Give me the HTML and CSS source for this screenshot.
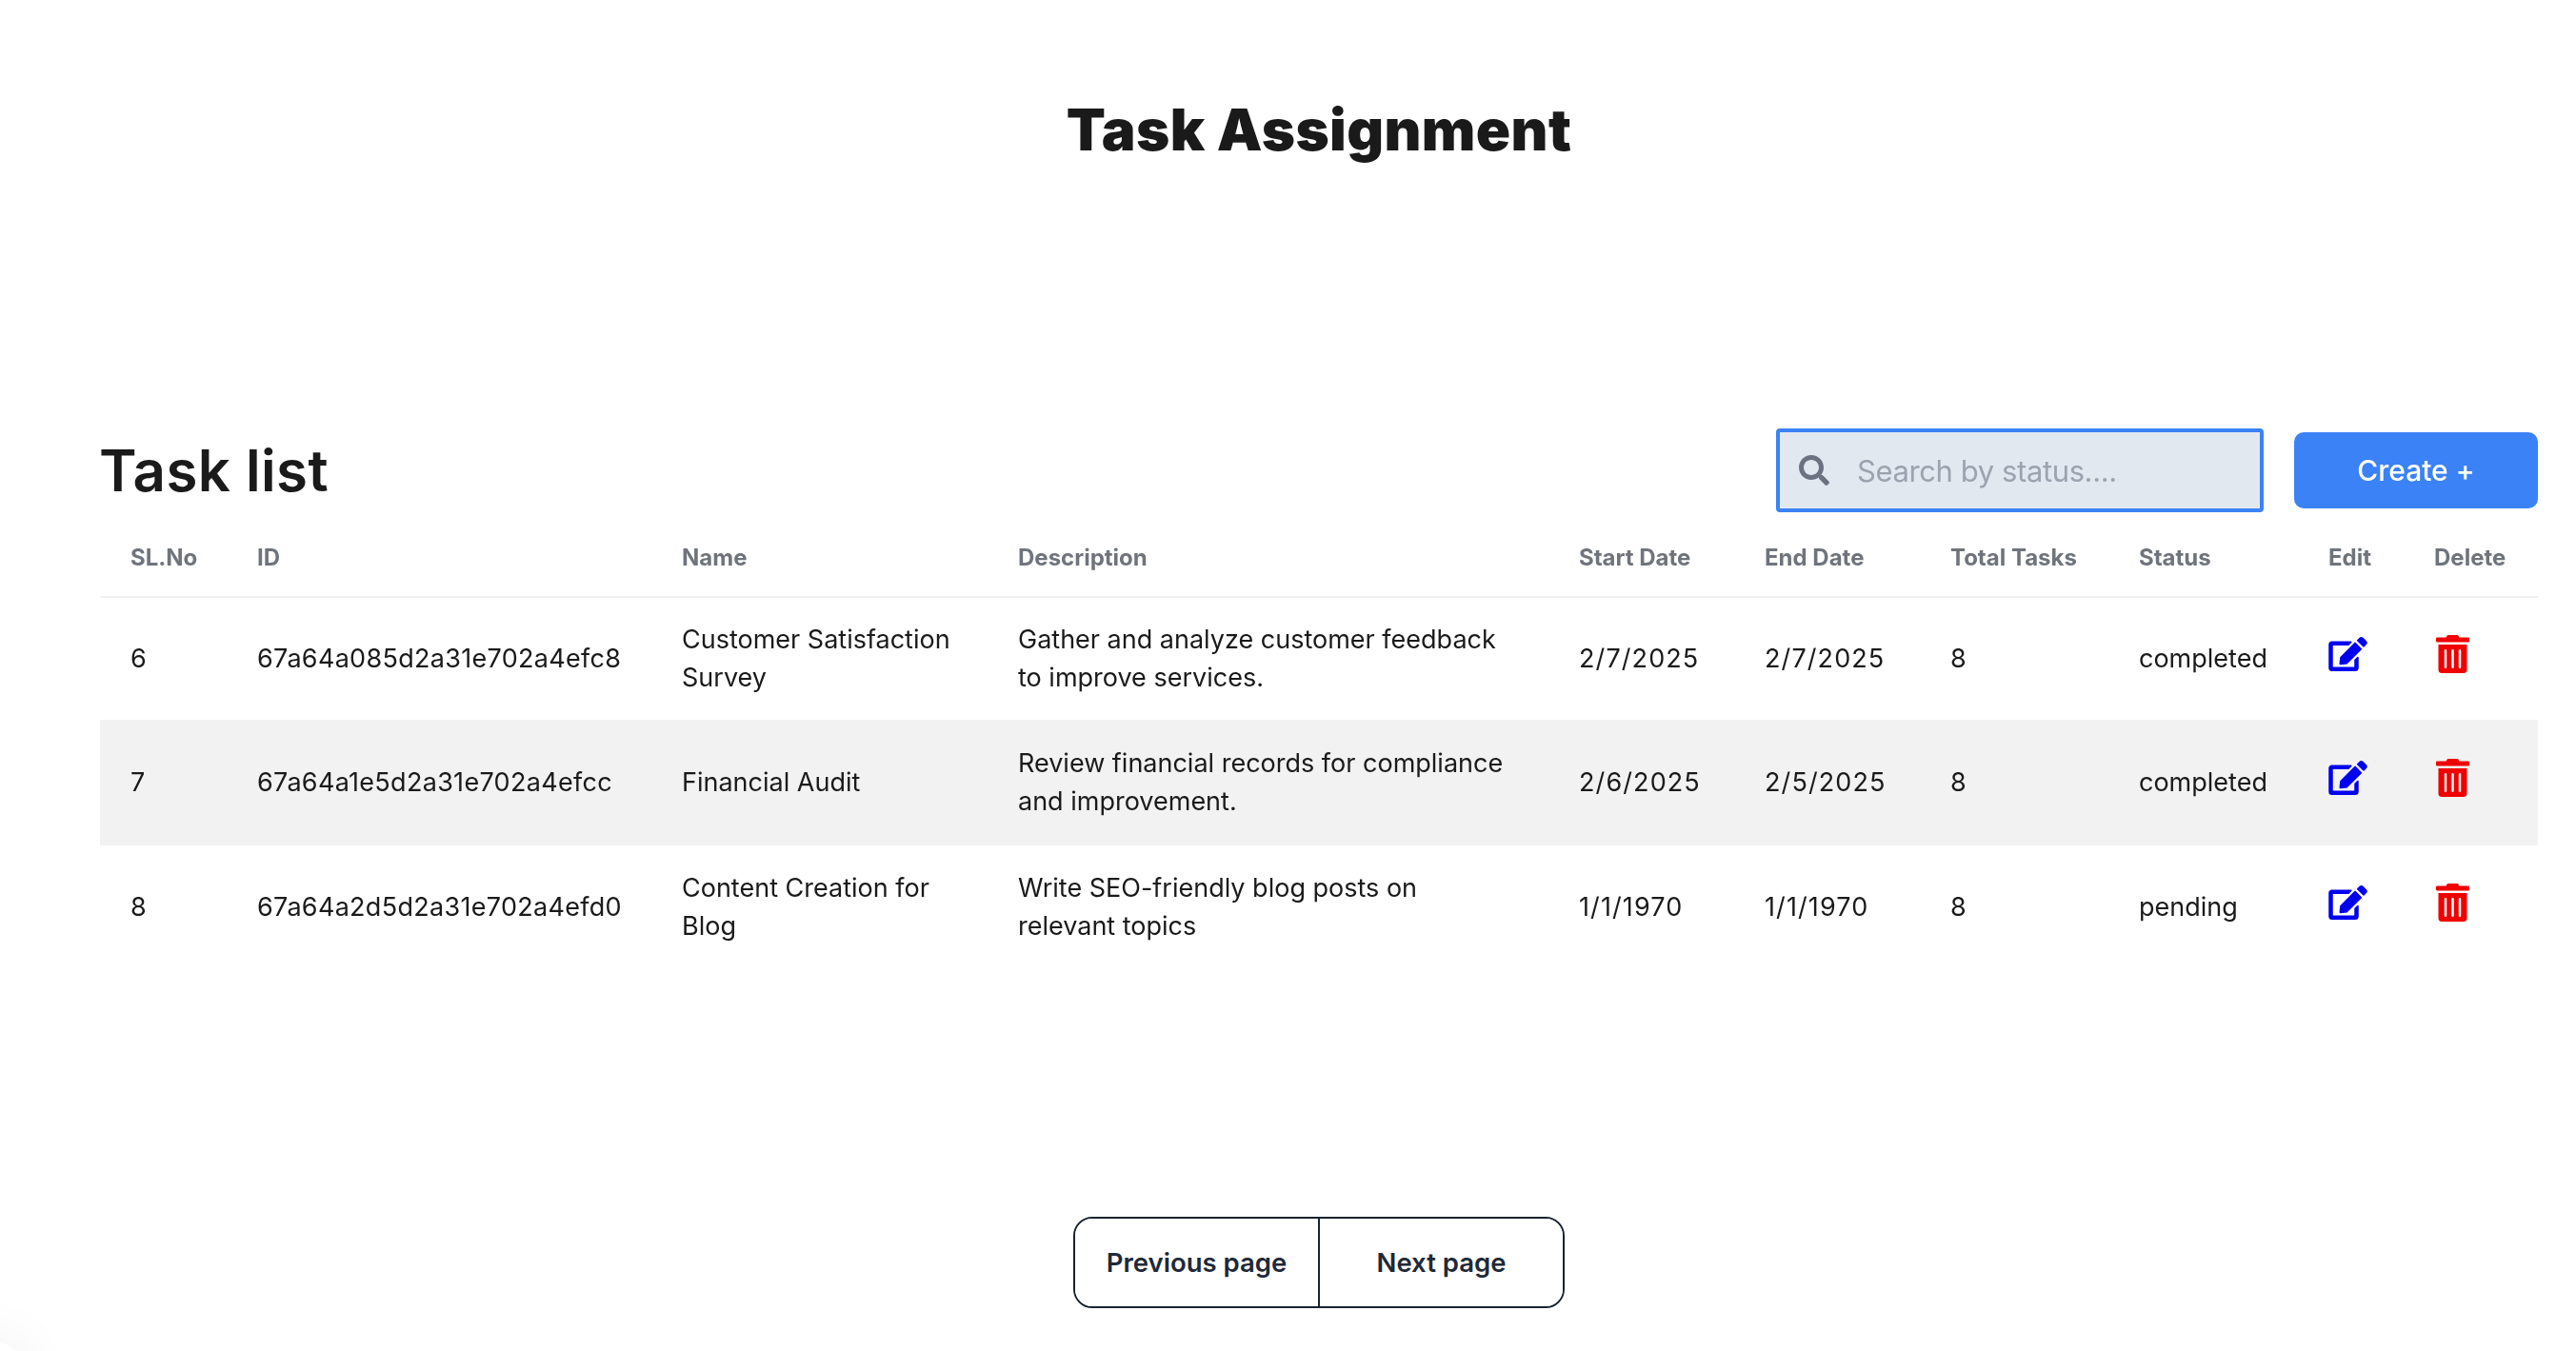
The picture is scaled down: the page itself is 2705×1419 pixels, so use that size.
FILE: index.html
```html
<!DOCTYPE html>
<html lang="en">
<head>
<meta charset="utf-8">
<title>Task Assignment</title>
<link rel="stylesheet" href="styles.css">
</head>
<body>
<svg class="sprite" xmlns="http://www.w3.org/2000/svg">
  <symbol id="i-edit" viewBox="0 0 576 512"><path d="M402.6 83.2l90.2 90.2c3.8 3.8 3.8 10 0 13.8L274.4 405.6l-92.8 10.3c-12.4 1.4-22.9-9.1-21.5-21.5l10.3-92.8L388.8 83.2c3.8-3.8 10-3.8 13.8 0zm162-22.9l-48.8-48.8c-15.2-15.2-39.9-15.2-55.2 0l-35.4 35.4c-3.8 3.8-3.8 10 0 13.8l90.2 90.2c3.8 3.8 10 3.8 13.8 0l35.4-35.4c15.2-15.3 15.2-40 0-55.2zM384 346.2V448H64V128h229.8c3.2 0 6.2-1.3 8.5-3.5l40-40c7.6-7.6 2.2-20.5-8.5-20.5H48C21.5 64 0 85.5 0 112v352c0 26.5 21.5 48 48 48h352c26.5 0 48-21.5 48-48V306.2c0-10.7-12.9-16-20.5-8.5l-40 40c-2.2 2.3-3.5 5.3-3.5 8.5z"/></symbol>
  <symbol id="i-trash" viewBox="0 0 448 512"><path d="M32 464a48 48 0 0 0 48 48h288a48 48 0 0 0 48-48V128H32zm272-256a16 16 0 0 1 32 0v224a16 16 0 0 1-32 0zm-96 0a16 16 0 0 1 32 0v224a16 16 0 0 1-32 0zm-96 0a16 16 0 0 1 32 0v224a16 16 0 0 1-32 0zM432 32H312l-9.4-18.7A24 24 0 0 0 281.1 0H166.8a23.72 23.72 0 0 0-21.4 13.3L136 32H16A16 16 0 0 0 0 48v32a16 16 0 0 0 16 16h416a16 16 0 0 0 16-16V48a16 16 0 0 0-16-16z"/></symbol>
</svg>
<div class="corner"></div>
<main class="page">
  <h1 class="title">Task Assignment</h1>
  <section class="toolbar">
    <h2 class="list-title">Task list</h2>
    <div class="actions">
      <label class="search">
        <svg class="search-icon" viewBox="0 0 512 512"><path d="M505 442.7L405.3 343c-4.5-4.5-10.6-7-17-7H372c27.6-35.3 44-79.7 44-128C416 93.1 322.9 0 208 0S0 93.1 0 208s93.1 208 208 208c48.3 0 92.7-16.4 128-44v16.3c0 6.4 2.5 12.5 7 17l99.7 99.7c9.4 9.4 24.6 9.4 33.9 0l28.3-28.3c9.4-9.4 9.4-24.6.1-34zM208 336c-70.7 0-128-57.2-128-128 0-70.7 57.2-128 128-128 70.7 0 128 57.2 128 128 0 70.7-57.2 128-128 128z"/></svg>
        <input class="search-input" type="text" placeholder="Search by status....">
      </label>
      <button class="create" type="button">Create +</button>
    </div>
  </section>
  <table class="tasks">
    <colgroup>
      <col class="c-sl"><col class="c-id"><col class="c-name"><col class="c-desc"><col class="c-date"><col class="c-date"><col class="c-total"><col class="c-status"><col class="c-edit"><col class="c-del">
    </colgroup>
    <thead>
      <tr><th>SL.No</th><th>ID</th><th>Name</th><th>Description</th><th>Start Date</th><th>End Date</th><th>Total Tasks</th><th>Status</th><th>Edit</th><th>Delete</th></tr>
    </thead>
    <tbody>
      <tr>
        <td>6</td><td class="id">67a64a085d2a31e702a4efc8</td><td>Customer Satisfaction Survey</td><td>Gather and analyze customer feedback to improve services.</td><td class="date">2/7/2025</td><td class="date">2/7/2025</td><td>8</td><td>completed</td>
        <td><svg class="icon edit"><use href="#i-edit"/></svg></td><td><svg class="icon trash"><use href="#i-trash"/></svg></td>
      </tr>
      <tr class="alt">
        <td>7</td><td class="id">67a64a1e5d2a31e702a4efcc</td><td>Financial Audit</td><td>Review financial records for compliance and improvement.</td><td class="date">2/6/2025</td><td class="date">2/5/2025</td><td>8</td><td>completed</td>
        <td><svg class="icon edit"><use href="#i-edit"/></svg></td><td><svg class="icon trash"><use href="#i-trash"/></svg></td>
      </tr>
      <tr>
        <td>8</td><td class="id">67a64a2d5d2a31e702a4efd0</td><td>Content Creation for Blog</td><td>Write SEO-friendly blog posts on relevant topics</td><td class="date">1/1/1970</td><td class="date">1/1/1970</td><td>8</td><td>pending</td>
        <td><svg class="icon edit"><use href="#i-edit"/></svg></td><td><svg class="icon trash"><use href="#i-trash"/></svg></td>
      </tr>
    </tbody>
  </table>
  <nav class="pager">
    <button class="pager-btn" type="button">Previous page</button>
    <button class="pager-btn" type="button">Next page</button>
  </nav>
</main>
</body>
</html>
```
FILE: styles.css
```css
* { box-sizing: border-box; }
html, body { margin: 0; height: 100%; background: #fff; overflow: hidden; }
body { font-family: Inter, "Liberation Sans", sans-serif; color: #1f1f1f; }
.sprite { display: none; }
.corner {
  position: fixed;
  left: -50px;
  bottom: -52px;
  width: 78px;
  height: 62px;
  border-radius: 50%;
  background: #fff;
  box-shadow: 0 0 60px rgba(0, 0, 0, .07);
}
.page { padding: 0 40px 0 105px; position: relative; }
.title {
  margin: 0;
  padding-top: 100px;
  height: 450px;
  text-align: center;
  font-size: 60px;
  line-height: 72px;
  font-weight: 900;
  letter-spacing: .4px;
  color: #1a1a1a;
}
.toolbar { display: flex; align-items: center; justify-content: space-between; height: 88px; }
.list-title { margin: 0 0 0 -1px; font-size: 60px; line-height: 72px; font-weight: 600; letter-spacing: .4px; color: #1a1a1a; }
.actions { display: flex; align-items: center; gap: 32px; }
.search {
  display: flex;
  align-items: center;
  gap: 27px;
  width: 512px;
  height: 88px;
  padding: 0 20px;
  background: #e2e8f0;
  border: 4px solid #3b82f6;
  border-radius: 4px;
}
.search-icon { width: 32px; height: 32px; fill: #6b7280; flex: none; }
.search-input {
  flex: 1;
  min-width: 0;
  border: 0;
  outline: 0;
  background: transparent;
  font: 400 31px Inter, "Liberation Sans", sans-serif;
  letter-spacing: -.4px;
  color: #1f2937;
}
.search-input::placeholder { color: #9ca3af; opacity: 1; }
.create {
  width: 256px;
  height: 80px;
  border: 0;
  border-radius: 10px;
  background: #3b82f6;
  color: #fff;
  font: 500 30px Inter, "Liberation Sans", sans-serif;
}
.tasks { width: 2560px; table-layout: fixed; border-collapse: collapse; }
.c-sl { width: 133px; }
.c-id { width: 446px; }
.c-name { width: 353px; }
.c-desc { width: 589px; }
.c-date { width: 195px; }
.c-total { width: 198px; }
.c-status { width: 199px; }
.c-edit { width: 111px; }
.c-del { width: 141px; }
thead tr { height: 89px; border-bottom: 2px solid #f0f0f0; }
th {
  padding: 6px 0 0 32px;
  text-align: left;
  font-size: 24px;
  font-weight: 700;
  color: #6f747c;
}
tbody tr { height: 130px; }
tbody tr:first-child { height: 129px; }
tbody tr.alt { height: 132px; }
td { padding: 0 32px; font-size: 27px; line-height: 40px; color: #1a1a1a; }
.id { letter-spacing: .3px; padding-right: 0; }
.date { letter-spacing: 1.1px; padding-right: 0; }
.alt { background: #f2f2f2; }
.icon { display: block; margin-top: -10px; }
.edit { width: 41px; height: 36px; fill: #0000f0; }
.trash { width: 35px; height: 40px; fill: #f00000; margin-left: 2px; }
.pager {
  display: flex;
  width: 516px;
  height: 96px;
  margin: 260px 0 0 1022px;
  border: 2px solid #1a2330;
  border-radius: 20px;
  overflow: hidden;
}
.pager-btn {
  flex: 1;
  border: 0;
  background: #fff;
  color: #1f2937;
  font: 600 27.5px Inter, "Liberation Sans", sans-serif;
}
.pager-btn + .pager-btn { border-left: 2px solid #1a2330; }
```
